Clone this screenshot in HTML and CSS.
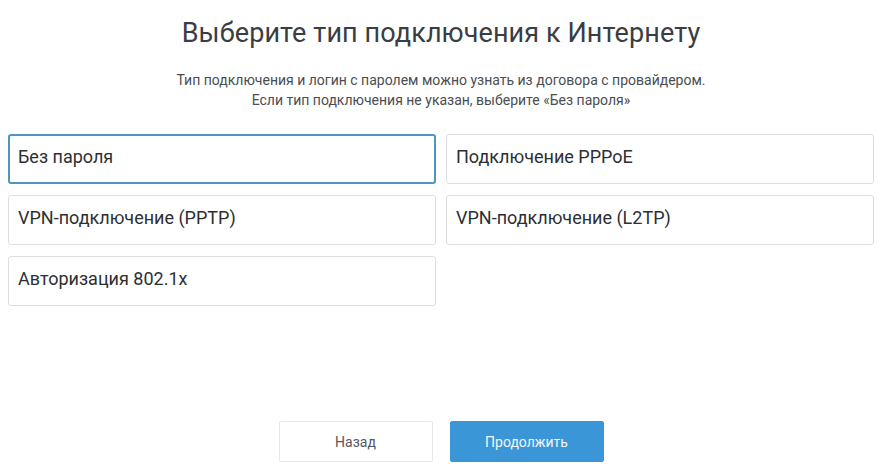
FILE: index.html
```html
<!DOCTYPE html>
<html lang="ru">
<head>
<meta charset="utf-8">
<link rel="stylesheet" href="styles.css">
</head>
<body>
<div class="page">
  <h1 class="title">Выберите тип подключения к Интернету</h1>
  <p class="hint">Тип подключения и логин с паролем можно узнать из договора с провайдером.<br>Если тип подключения не указан, выберите «Без пароля»</p>
  <div class="options">
    <div class="option selected">Без пароля</div>
    <div class="option">Подключение PPPoE</div>
    <div class="option">VPN-подключение (PPTP)</div>
    <div class="option">VPN-подключение (L2TP)</div>
    <div class="option">Авторизация 802.1x</div>
  </div>
  <div class="actions">
    <button class="btn btn-back">Назад</button>
    <button class="btn btn-next">Продолжить</button>
  </div>
</div>
</body>
</html>
```
FILE: styles.css
```css
html, body {
  margin: 0;
  padding: 0;
  background: #fff;
}
body {
  font-family: Roboto, "Liberation Sans", sans-serif;
  color: #333;
}
.page {
  width: 866px;
  margin-left: 8px;
  display: flex;
  flex-direction: column;
  height: 472px;
}
.title {
  margin: 16px 0 0;
  font-size: 27px;
  font-weight: 400;
  line-height: 34px;
  text-align: center;
  color: #3a3d42;
  letter-spacing: 0.1px;
}
.hint {
  margin: 20px 0 0;
  font-size: 14px;
  line-height: 20px;
  text-align: center;
  color: #4a4d52;
}
.options {
  margin-top: 24px;
  display: grid;
  grid-template-columns: 1fr 1fr;
  column-gap: 10px;
  row-gap: 11px;
}
.option {
  height: 50px;
  box-sizing: border-box;
  border: 1px solid #dcdfe2;
  border-radius: 3px;
  padding: 0 9px;
  display: flex;
  align-items: center;
  padding-bottom: 6px;
  font-size: 18px;
  color: #2c2f33;
}
.option.selected {
  border: 2px solid #4d97bf;
  padding-left: 8px;
}
.actions {
  margin-top: auto;
  margin-bottom: 10px;
  display: flex;
  justify-content: center;
  gap: 17px;
}
.btn {
  width: 154px;
  height: 41px;
  font-family: Roboto, "Liberation Sans", sans-serif;
  font-size: 14px;
  border-radius: 2px;
  cursor: pointer;
}
.btn-back {
  background: #fff;
  border: 1px solid #e4e8ea;
  color: #55595e;
}
.btn-next {
  background: #3b96d8;
  border: 1px solid #3b96d8;
  color: #f2f7fb;
}
```
